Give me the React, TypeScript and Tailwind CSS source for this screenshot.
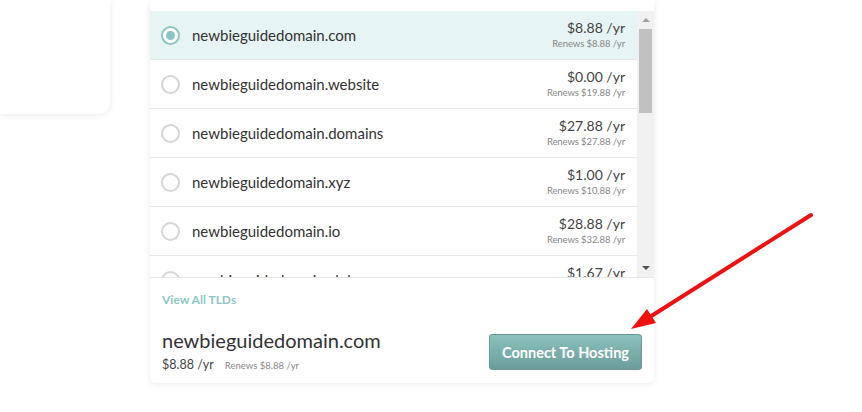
import React from "react";

interface Tld {
  name: string;
  price: string;
  renews: string;
}

const tlds: Tld[] = [
  { name: "newbieguidedomain.com", price: "$8.88", renews: "$8.88" },
  { name: "newbieguidedomain.website", price: "$0.00", renews: "$19.88" },
  { name: "newbieguidedomain.domains", price: "$27.88", renews: "$27.88" },
  { name: "newbieguidedomain.xyz", price: "$1.00", renews: "$10.88" },
  { name: "newbieguidedomain.io", price: "$28.88", renews: "$32.88" },
  { name: "newbieguidedomain.club", price: "$1.67", renews: "$12.88" },
];

const Radio: React.FC<{ checked: boolean }> = ({ checked }) => (
  <span
    className={
      checked
        ? "flex h-[19px] w-[19px] shrink-0 items-center justify-center rounded-full border-2 border-[#8cc6c4] bg-white"
        : "flex h-[19px] w-[19px] shrink-0 items-center justify-center rounded-full border-2 border-[#d6d6d6] bg-white"
    }
  >
    {checked && <span className="h-[9px] w-[9px] rounded-full bg-[#8cc6c4]" />}
  </span>
);

const Row: React.FC<{ tld: Tld; selected: boolean }> = ({ tld, selected }) => (
  <div
    className={
      selected
        ? "flex h-[49px] shrink-0 items-center border-b border-[#e8e8e8] bg-[#e6f4f3] pl-[11px] pr-[12px]"
        : "flex h-[49px] shrink-0 items-center border-b border-[#e8e8e8] bg-white pl-[11px] pr-[12px]"
    }
  >
    <Radio checked={selected} />
    <span className="ml-[12px] text-[15px] text-[#333]">{tld.name}</span>
    <div className="ml-auto flex flex-col items-end leading-none">
      <span className="text-[14px] text-[#444]">{tld.price} /yr</span>
      <span className="mt-[4px] text-[9.5px] tracking-[-0.1px] text-[#888]">Renews {tld.renews} /yr</span>
    </div>
  </div>
);

const Scrollbar: React.FC = () => (
  <div className="flex w-[17px] shrink-0 flex-col items-center bg-[#f1f1f1]">
    <div className="flex h-[18px] items-center justify-center">
      <span className="h-0 w-0 border-x-[4px] border-b-[4px] border-x-transparent border-b-[#a3a3a3]" />
    </div>
    <div className="h-[84px] w-[13px] bg-[#c1c1c1]" />
    <div className="flex-1" />
    <div className="flex h-[18px] items-center justify-center">
      <span className="h-0 w-0 border-x-[4px] border-t-[4px] border-x-transparent border-t-[#505050]" />
    </div>
  </div>
);

export default function App() {
  return (
    <div className="relative h-[412px] w-[862px] overflow-hidden bg-white font-['Lato',sans-serif]">
      <div className="flex items-start">
        <div className="h-[114px] w-[110px] rounded-br-[10px] bg-white shadow-[0_1px_6px_rgba(0,0,0,0.09)]" />
        <div className="ml-[40px] flex h-[383px] w-[504px] flex-col rounded-b-[6px] bg-white shadow-[0_1px_6px_rgba(0,0,0,0.09)]">
          <div className="mt-[11px] flex h-[267px] border-b border-[#e8e8e8]">
            <div className="flex flex-1 flex-col overflow-hidden">
              {tlds.map((t, i) => (
                <Row key={t.name} tld={t} selected={i === 0} />
              ))}
            </div>
            <Scrollbar />
          </div>
          <div className="px-[12px]">
            <div className="mt-[13px] text-[12px] font-bold text-[#8ec6c4]">View All TLDs</div>
            <div className="mt-[21px] flex items-center">
              <div className="flex flex-col">
                <span className="text-[20px] leading-none text-[#333]">newbieguidedomain.com</span>
                <div className="mt-[6px] flex items-baseline">
                  <span className="text-[12.5px] text-[#444]">$8.88 /yr</span>
                  <span className="ml-[11px] text-[9.5px] text-[#888]">Renews $8.88 /yr</span>
                </div>
              </div>
              <button className="ml-auto h-[36px] w-[153px] rounded-[3px] border border-[#6a9a97] bg-gradient-to-b from-[#8cc1be] to-[#6c9d9a] text-[14.5px] font-bold text-white">
                Connect To Hosting
              </button>
            </div>
          </div>
        </div>
      </div>
      <svg className="absolute left-0 top-0" width="862" height="412" viewBox="0 0 862 412">
        <line x1="811" y1="215" x2="645" y2="320" stroke="#f01010" strokeWidth="4" strokeLinecap="round" />
        <polygon points="631,329 647,309 656,323" fill="#f01010" />
      </svg>
    </div>
  );
}
